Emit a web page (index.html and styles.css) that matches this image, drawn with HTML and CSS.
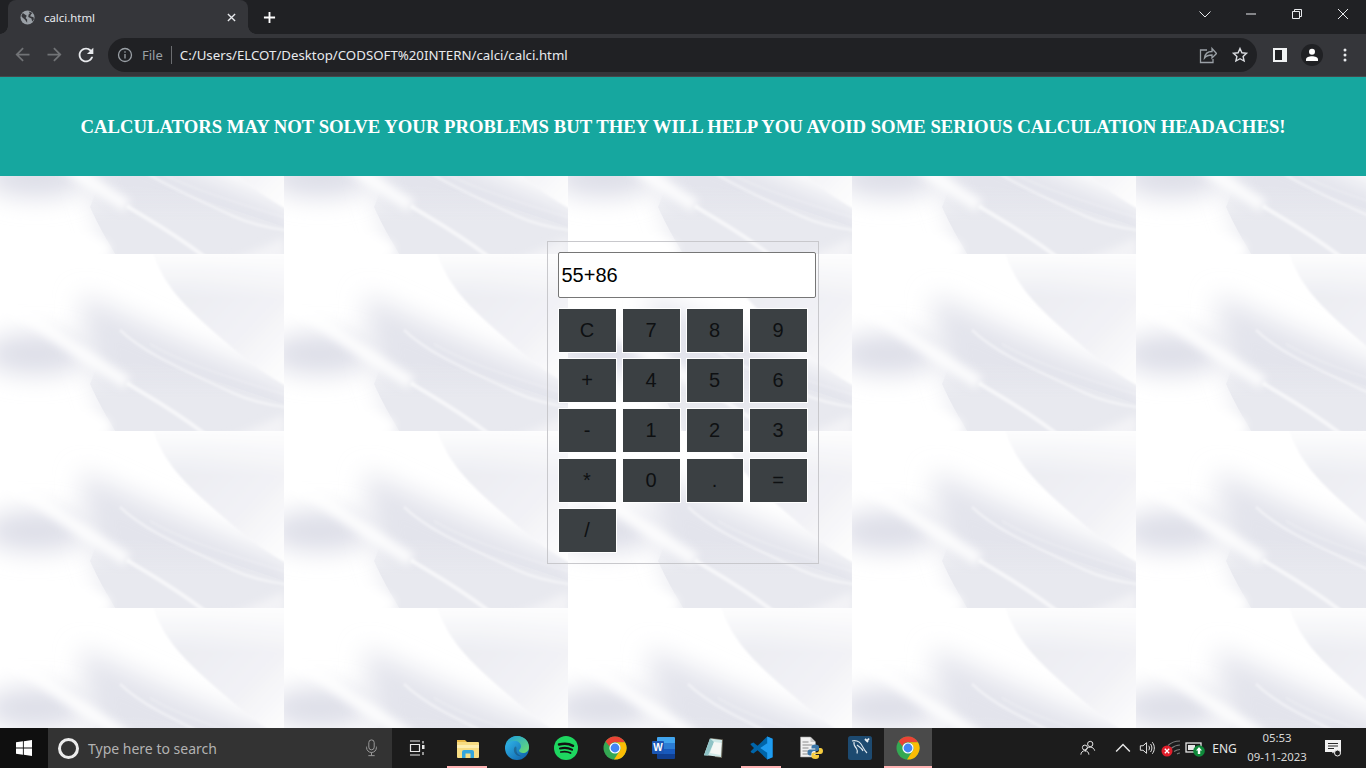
FILE: index.html
```html
<!DOCTYPE html>
<html lang="en">
<head>
<meta charset="utf-8">
<title>calci.html</title>
<link rel="stylesheet" href="styles.css">
</head>
<body>
<svg class="defs" width="0" height="0" aria-hidden="true">
  <symbol id="chrome" viewBox="0 0 24 24">
    <circle cx="12" cy="12" r="11.5" fill="#34a853"/>
    <path fill="#ea4335" d="M12 .5a11.5 11.5 0 0 1 10 5.8H12a5.7 5.7 0 0 0-5.5 4L2.6 5.4A11.5 11.5 0 0 1 12 .5z"/>
    <path fill="#fbbc04" d="M22 6.3A11.5 11.5 0 0 1 11 23.5l4.9-7.4a5.7 5.7 0 0 0 1-6.7 5.7 5.7 0 0 0-4.9-3.1z"/>
    <circle cx="12" cy="12" r="5.6" fill="#fff"/>
    <circle cx="12" cy="12" r="4.4" fill="#4285f4"/>
  </symbol>
</svg>

<header class="tabstrip">
  <div class="tab">
    <svg class="favicon" viewBox="0 0 16 16"><circle cx="8" cy="8" r="7.5" fill="#9aa0a6"/><path fill="#35363a" d="M3 3.200 7.200 6 6 8.400 7.600 10v3.600L5.400 10.400 2 7.400 1.500 6zM9.500 1.500l3.800 1.700-1.500 1.400-1 2 3.700 1 .3 2.500-1.800 2.200-.8-3.300-3.400-1.600.4-2.700 1.200-.7z"/></svg>
    <span class="tab-title">calci.html</span>
    <svg class="tab-close" viewBox="0 0 10 10"><path d="M1 1l8 8M9 1l-8 8"/></svg>
  </div>
  <button class="new-tab" type="button"><svg viewBox="0 0 14 14"><path d="M7 1v12M1 7h12"/></svg></button>
  <div class="window-controls">
    <span class="win-btn"><svg viewBox="0 0 14 14"><path d="M1.500 4.500 7 10l5.500-5.500"/></svg></span>
    <span class="win-btn"><svg viewBox="0 0 14 14"><path d="M2 7h10"/></svg></span>
    <span class="win-btn"><svg viewBox="0 0 14 14"><path d="M2.500 4.500h7v7h-7zM4.500 4.500v-2h7v7h-2"/></svg></span>
    <span class="win-btn"><svg viewBox="0 0 14 14"><path d="M2 2l10 10M12 2 2 12"/></svg></span>
  </div>
</header>

<nav class="toolbar">
  <span class="tool dim"><svg viewBox="0 0 24 24"><path d="M20 11H7.800l5.600-5.600L12 4l-8 8 8 8 1.400-1.400L7.800 13H20z"/></svg></span>
  <span class="tool dim"><svg viewBox="0 0 24 24"><path d="M4 11h12.200l-5.600-5.600L12 4l8 8-8 8-1.400-1.400 5.600-5.600H4z"/></svg></span>
  <span class="tool"><svg viewBox="0 0 24 24"><path d="M17.650 6.350A7.958 7.958 0 0 0 12 4c-4.420 0-7.990 3.580-7.990 8s3.570 8 7.990 8c3.730 0 6.840-2.550 7.730-6h-2.080A5.990 5.990 0 0 1 12 18c-3.310 0-6-2.690-6-6s2.690-6 6-6c1.660 0 3.140.690 4.220 1.780L13 11h7V4l-2.350 2.350z"/></svg></span>
  <div class="omnibox">
    <svg class="info" viewBox="0 0 16 16"><circle cx="8" cy="8" r="6.500"/><path d="M8 7v4.500M8 4.300v1.400"/></svg>
    <span class="scheme">File</span>
    <span class="omni-sep"></span>
    <span class="url">C:/Users/ELCOT/Desktop/CODSOFT%20INTERN/calci/calci.html</span>
    <span class="omni-actions">
      <span class="omni-act"><svg viewBox="0 0 18 18"><path d="M8 4H1.500v12.500h12.500V13M5.500 12c.5-4 3.500-6.500 7.500-6.500V2.500l4.500 5-4.500 4.500V9c-3 0-5.800 .8-7.500 3z"/></svg></span>
      <span class="omni-act"><svg viewBox="0 0 18 18"><path d="M9 2.500l1.900 4.300 4.600.5-3.400 3.100 1 4.600L9 12.700l-4.100 2.300 1-4.600-3.400-3.100 4.600-.5z"/></svg></span>
    </span>
  </div>
  <span class="tool panel-btn"><span class="panel-icon"></span></span>
  <span class="tool"><span class="avatar"><svg viewBox="0 0 14 14"><circle cx="7" cy="3.800" r="3"/><path d="M1 13v-1.500C1 9.500 4 8.300 7 8.300s6 1.200 6 3.200V13z"/></svg></span></span>
  <span class="tool"><svg viewBox="0 0 16 16" class="dots"><circle cx="8" cy="3" r="1.500"/><circle cx="8" cy="8" r="1.500"/><circle cx="8" cy="13" r="1.500"/></svg></span>
</nav>

<main class="page">
  <div class="banner">
    <h3 class="banner-text">CALCULATORS MAY NOT SOLVE YOUR PROBLEMS BUT THEY WILL HELP YOU AVOID SOME SERIOUS CALCULATION HEADACHES!</h3>
  </div>
  <section class="calc">
    <input class="display" type="text" value="55+86">
    <div class="keys">
      <button class="key" type="button">C</button>
      <button class="key" type="button">7</button>
      <button class="key" type="button">8</button>
      <button class="key" type="button">9</button>
      <button class="key" type="button">+</button>
      <button class="key" type="button">4</button>
      <button class="key" type="button">5</button>
      <button class="key" type="button">6</button>
      <button class="key" type="button">-</button>
      <button class="key" type="button">1</button>
      <button class="key" type="button">2</button>
      <button class="key" type="button">3</button>
      <button class="key" type="button">*</button>
      <button class="key" type="button">0</button>
      <button class="key" type="button">.</button>
      <button class="key" type="button">=</button>
      <button class="key" type="button">/</button>
    </div>
  </section>
</main>

<footer class="taskbar">
  <div class="start">
    <svg viewBox="0 0 16 16"><path d="M0 2.300 6.900 1.300v6.300H0zM7.800 1.200 16 0v7.600H7.800zM0 8.500h6.900v6.200L0 13.700zM7.800 8.500H16V16l-8.200-1.200z"/></svg>
  </div>
  <div class="search">
    <span class="cortana"></span>
    <span class="search-text">Type here to search</span>
    <svg class="mic" viewBox="0 0 14 20"><rect x="4" y="1" width="6" height="11" rx="3"/><path d="M1.500 8.500v1a5.500 5.500 0 0 0 11 0v-1M7 15v3.500M3.500 18.500h7"/></svg>
  </div>
  <div class="task-view">
    <svg viewBox="0 0 16 16"><path d="M1 1h10M1 15h10M1.500 4.500h9v7h-9zM14 1v2.500M14 12v3"/><rect x="13" y="5" width="2.500" height="4" fill="#e8e8e8" stroke="none"/></svg>
  </div>
  <div class="apps">
    <span class="app running">
      <svg viewBox="0 0 24 24"><path fill="#e9b949" d="M1 4h8l2 2h-10z"/><path fill="#f7dc83" d="M1 6h21a1 1 0 0 1 1 1v14a1 1 0 0 1-1 1H2a1 1 0 0 1-1-1z"/><path fill="#fdeeb0" d="M1 9h22v3H1z"/><path fill="#34a5dc" d="M6 22v-6a2 2 0 0 1 2-2h8a2 2 0 0 1 2 2v6h-3.500v-4.500h-5V22z"/></svg>
    </span>
    <span class="app">
      <svg viewBox="0 0 24 24"><defs><linearGradient id="edgeA" x1="0" y1="0" x2="1" y2="1"><stop offset="0" stop-color="#35c1f1"/><stop offset="1" stop-color="#0c59a4"/></linearGradient><linearGradient id="edgeB" x1="0" y1="0" x2="1" y2="1"><stop offset="0" stop-color="#1b9de2"/><stop offset="1" stop-color="#6ee06a"/></linearGradient></defs><circle cx="12" cy="12" r="12" fill="url(#edgeA)"/><path fill="url(#edgeB)" d="M2 6C5 1 10 0 12 0c7 0 12 5 12 11 0 4-3 6-6 6-2 0-4-1-4-2.500 0-1 2-1.500 2-4C16 7 13 5 10 5 6 5 3.500 6 2 8z"/><path fill="#1a2b3c" d="M10.500 10.500c-2 1-2.500 5 .5 8 1.500 1.500 4 2 5.500 1.500-3.500-.5-5.500-4-5-7 .1-1 0-2.500-1-2.500z" opacity=".35"/></svg>
    </span>
    <span class="app">
      <svg viewBox="0 0 24 24"><circle cx="12" cy="12" r="12" fill="#1ed760"/><g fill="none" stroke="#121212" stroke-linecap="round"><path stroke-width="2.500" d="M5 8.500c4.500-1.200 10-1 14 1.300"/><path stroke-width="2.100" d="M6 12.500c4-1 8.500-.7 12 1.200"/><path stroke-width="1.700" d="M6.800 16c3.500-.8 7-.5 9.800 1"/></g></svg>
    </span>
    <span class="app"><svg viewBox="0 0 24 24"><use href="#chrome"/></svg></span>
    <span class="app">
      <svg viewBox="0 0 24 24"><path fill="#41a5ee" d="M6 1h16a1 1 0 0 1 1 1v5H5V2a1 1 0 0 1 1-1z"/><path fill="#2b7cd3" d="M5 7h18v6H5z"/><path fill="#185abd" d="M5 13h18v5H5z"/><path fill="#103f91" d="M5 18h18v4a1 1 0 0 1-1 1H6a1 1 0 0 1-1-1z"/><rect x="0" y="5" width="12" height="13" rx="1" fill="#1a56b5"/><text x="6" y="15.300" class="word-w">W</text></svg>
    </span>
    <span class="app">
      <svg viewBox="0 0 24 24"><path fill="#6e6a5c" d="M10 2 22 3.500 21 22 14 21z"/><path fill="#cfe9e8" d="M9 2.500 21 4 20 21 3 19z"/><path fill="#8fc3c6" d="M9 2.500 13 6 7 19.500H3z"/><path fill="#f4f7f5" d="M13 6 20.500 7 19.500 19 9 17z"/></svg>
    </span>
    <span class="app running">
      <svg viewBox="0 0 24 24"><path fill="#0065a9" d="M17.200.6 7.600 9.700 3.400 6.500 1.200 7.600a1 1 0 0 0-.2 1.400L4 12 1 15c-.4.400-.3 1 .2 1.400l2.200 1.100 4.200-3.200 9.600 9.100 5.400-2.200V2.800z"/><path fill="#1f9cf0" d="M17.200.6 22.600 2.800v18.400l-5.400 2.200zM17.200 7.200 10.200 12l7 4.800z"/></svg>
    </span>
    <span class="app">
      <svg viewBox="0 0 24 24"><path fill="#f1f1f1" stroke="#9a9a9a" stroke-width=".6" d="M1.500 1h10l5 5v15H1.500z"/><path fill="#c9c9c9" d="M11.500 1v5h5z"/><path stroke="#8b8b8b" stroke-width="1" d="M3.500 6h6M3.500 9h10M3.500 12h6M3.500 15h6M3.500 18h6"/><path fill="#3a76a8" d="M16 8.500c-2.500 0-3.500 1-3.500 2.500v1.500H17v1h-6c-1.500 0-2.500 1-2.500 3s1 3 2.500 3h1.500v-2c0-1.500 1-2.500 2.500-2.500h3c1 0 2-1 2-2V11c0-1.500-1-2.500-4-2.500z"/><path fill="#f5cb3e" d="M16.500 23c2.500 0 3.500-1 3.500-2.500V19h-4.500v-1h6c1.500 0 2.500-1 2.500-3s-1-3-2.500-3H20v2c0 1.500-1 2.500-2.500 2.500h-3c-1 0-2 1-2 2v2c0 1.500 1 2.500 4 2.500z"/></svg>
    </span>
    <span class="app">
      <svg viewBox="0 0 24 24"><rect width="24" height="24" rx="2.500" fill="#1d4a70"/><path fill="none" stroke="#dfe8ee" stroke-width="1.100" d="M4 5c3-1 7 0 9 3 2 3 3 6 6 9M6 6c-.5 3 1 5 2.500 6.500 1 1.500 1 3 .5 5M9 9c2 2 5 3 6 6"/><path stroke="#eaf0f4" stroke-width="1.800" d="M17 3l3 3M21 2.500l-2 2.500"/></svg>
    </span>
    <span class="app active running"><svg viewBox="0 0 24 24"><use href="#chrome"/></svg></span>
  </div>
  <div class="tray">
    <span class="tray-slot people"><svg viewBox="0 0 18 18"><g fill="none" stroke="#e6e6e6" stroke-width="1.100"><circle cx="11.500" cy="4.500" r="3"/><path d="M6 13c0-3 2.500-5 5.500-5S16 10 16.500 12"/><circle cx="5.500" cy="8.500" r="2.800"/><path d="M1 16.500c0-2.500 2-4.500 4.500-4.500S10 14 10 16.500"/></g></svg></span>
    <span class="tray-slot chevron"><svg viewBox="0 0 14 14"><path d="M1 10l6-6 6 6" fill="none" stroke="#e6e6e6" stroke-width="1.300"/></svg></span>
    <span class="tray-slot volume"><svg viewBox="0 0 18 18"><g fill="none" stroke="#e6e6e6" stroke-width="1.100"><path d="M1.500 6.500h3l4-3.500v12l-4-3.500h-3z"/><path d="M11 6.500c1 1.500 1 3.500 0 5M13 4.500c2 2.500 2 6.500 0 9M15 2.500c3 4 3 9 0 13"/></g></svg></span>
    <span class="tray-slot wifi"><svg viewBox="0 0 20 18"><g fill="none" stroke="#7b7b7b" stroke-width="1.200"><path d="M7 6.500C10 3.500 15 2 19 2M10 9.500c2.500-2 5.500-3.500 9-3.500M13 12.500c2-1.200 4-2 6-2M16 15c1-.6 2-1 3-1"/></g><circle cx="6" cy="12" r="5.500" fill="#e01e2b"/><path d="M3.800 9.800l4.400 4.400M8.200 9.800l-4.400 4.400" stroke="#fff" stroke-width="1.300"/></svg></span>
    <span class="tray-slot battery"><svg viewBox="0 0 20 18"><rect x="1" y="4" width="15" height="9" fill="none" stroke="#e6e6e6" stroke-width="1.300"/><rect x="3" y="6" width="7" height="5" fill="#e6e6e6"/><circle cx="14" cy="12" r="5.800" fill="#0f8a3a"/><path d="M14 8l3 3.500h-1.800V15h-2.400v-3.500H11z" fill="#fff"/></svg></span>
    <span class="tray-lang">ENG</span>
    <span class="clock"><span>05:53</span><span>09-11-2023</span></span>
    <span class="notify"><svg viewBox="0 0 18 18"><path fill="#f2f2f2" d="M1 1h16v12H10l-1 1.500L8 13H1z"/><path stroke="#2a2a2a" stroke-width="1" d="M4 4.500h10M4 7h10M4 9.500h6"/><circle cx="13.500" cy="14" r="3" fill="#1c1c1c" stroke="#f2f2f2" stroke-width="1"/></svg></span>
  </div>
</footer>
</body>
</html>
```

FILE: styles.css
```css
* { box-sizing: border-box; }

html, body { height: 100%; }

body {
  margin: 0;
  height: 768px;
  overflow: hidden;
  display: flex;
  flex-direction: column;
  font-family: "Noto Sans", "Open Sans", sans-serif;
  background: #fff;
}

.defs { position: absolute; }

svg { display: block; }

/* Browser tab strip */
.tabstrip {
  flex: none;
  height: 34px;
  display: flex;
  align-items: stretch;
  background: #202124;
  padding-left: 8px;
}

.tab {
  position: relative;
  width: 240px;
  display: flex;
  align-items: center;
  padding: 0 10px 0 12px;
  background: #35363a;
  border-radius: 8px 8px 0 0;
}

.tab::before,
.tab::after {
  content: "";
  position: absolute;
  bottom: 0;
  width: 8px;
  height: 8px;
}

.tab::before {
  left: -8px;
  background: radial-gradient(circle at 0 0, #202124 7.500px, #35363a 8px);
}

.tab::after {
  right: -8px;
  background: radial-gradient(circle at 100% 0, #202124 7.500px, #35363a 8px);
}

.favicon { width: 15px; height: 15px; flex: none; }

.tab-title {
  flex: 1;
  margin-left: 9px;
  font-size: 11.400px;
  color: #e8eaed;
}

.tab-close { width: 9px; height: 9px; margin-right: 2px; }
.tab-close path { fill: none; stroke: #e8eaed; stroke-width: 1.500; }

.new-tab {
  width: 28px;
  margin-left: 7px;
  padding: 0;
  border: 0;
  background: none;
  display: flex;
  align-items: center;
  justify-content: center;
}
.new-tab svg { width: 13px; height: 13px; }
.new-tab path { fill: none; stroke: #fff; stroke-width: 2; }

.window-controls { margin-left: auto; display: flex; height: 28px; }

.win-btn {
  width: 46px;
  display: flex;
  align-items: center;
  justify-content: center;
}
.win-btn svg { width: 14px; height: 14px; }
.win-btn path { fill: none; stroke: #e8eaed; stroke-width: 1; }

/* Browser toolbar */
.toolbar {
  flex: none;
  height: 43px;
  display: flex;
  align-items: center;
  padding: 0 5px 1px 6px;
  background: #35363a;
  border-bottom: 1px solid #47484b;
}

.tool {
  width: 32px;
  height: 32px;
  flex: none;
  display: flex;
  align-items: center;
  justify-content: center;
}
.tool svg { width: 22px; height: 22px; fill: #e8eaed; }
.tool.dim svg { fill: #717376; width: 21px; height: 21px; }

.omnibox {
  width: 1149px;
  height: 34px;
  margin: 0 7px 0 6px;
  flex: none;
  display: flex;
  align-items: center;
  padding-left: 9px;
  background: #202124;
  border-radius: 17px;
}

.info { width: 16px; height: 16px; flex: none; }
.info circle, .info path { fill: none; stroke: #9aa0a6; stroke-width: 1.300; }

.scheme { margin-left: 9px; font-size: 13px; color: #9aa0a6; }
.omni-sep { width: 1px; height: 18px; margin: 0 8px 0 8px; background: #6b6d70; }
.url { font-size: 13.250px; color: #e8eaed; }

.omni-actions { margin-left: auto; display: flex; padding-right: 1px; }
.omni-act {
  width: 32px;
  height: 32px;
  display: flex;
  align-items: center;
  justify-content: center;
}
.omni-act svg { width: 18px; height: 18px; }
.omni-act path { fill: none; stroke: #9aa0a6; stroke-width: 1.300; }
.omni-act + .omni-act path { stroke: #dadce0; stroke-width: 1.400; }

.panel-icon {
  width: 14px;
  height: 14px;
  border: 2px solid #f1f3f4;
  border-right-width: 5px;
  background: #202124;
}

.avatar {
  width: 22px;
  height: 22px;
  border-radius: 50%;
  background: #202124;
  display: flex;
  align-items: center;
  justify-content: center;
}
.tool .avatar svg { width: 14px; height: 14px; fill: #fff; }
.tool svg.dots { width: 16px; height: 16px; fill: #e8eaed; margin-left: 2px; }

/* Page */
.page {
  flex: 1;
  min-height: 0;
  display: flex;
  flex-direction: column;
  align-items: center;
  background-color: #fff;
  background-size: 284px 177px;
  background-repeat: repeat;
  background-image: url("data:image/svg+xml,<svg xmlns='http://www.w3.org/2000/svg' width='284' height='177' viewBox='0 0 284 177'><defs><filter id='a' filterUnits='userSpaceOnUse' x='-60' y='-60' width='404' height='297'><feGaussianBlur stdDeviation='13'/></filter><filter id='b' filterUnits='userSpaceOnUse' x='-60' y='-60' width='404' height='297'><feGaussianBlur stdDeviation='4'/></filter><filter id='c' filterUnits='userSpaceOnUse' x='-60' y='-60' width='404' height='297'><feGaussianBlur stdDeviation='.7'/></filter><filter id='d' filterUnits='userSpaceOnUse' x='-60' y='-60' width='404' height='297'><feGaussianBlur stdDeviation='1.300'/></filter><linearGradient id='g' gradientUnits='userSpaceOnUse' x1='0' y1='105' x2='0' y2='145'><stop offset='0' stop-color='%23e8e9ef' stop-opacity='0'/><stop offset='1' stop-color='%23e8e9ef'/></linearGradient><linearGradient id='w' gradientUnits='userSpaceOnUse' x1='185' y1='35' x2='285' y2='130'><stop offset='0' stop-color='%23ecedf2'/><stop offset='.55' stop-color='%23f2f2f6'/><stop offset='1' stop-color='%23fefefe'/></linearGradient><linearGradient id='t' gradientUnits='userSpaceOnUse' x1='0' y1='0' x2='0' y2='45'><stop offset='0' stop-color='%23fff' stop-opacity='.9'/><stop offset='1' stop-color='%23fff' stop-opacity='0'/></linearGradient></defs><rect width='284' height='177' fill='%23fff'/><ellipse cx='36' cy='100' rx='52' ry='20' fill='%23dcdde7' filter='url(%23a)'/><path d='M80 40 150 72 300 135V190H115L90 110Z' fill='%23e3e4ec' filter='url(%23a)'/><path d='M90 130C98 148 107 163 117 180H300V155L180 115 100 105Z' fill='url(%23g)' filter='url(%23c)'/><path d='M-20 46C20 52 45 74 62 86 85 102 110 118 127 129' fill='none' stroke='%23fff' stroke-width='13' stroke-opacity='.85' filter='url(%23b)'/><path d='M127 129C140 138 165 150 205 180' fill='none' stroke='%23fff' stroke-width='4' stroke-opacity='.6' filter='url(%23d)'/><ellipse cx='40' cy='172' rx='70' ry='18' fill='%23fff' filter='url(%23b)'/><path d='M120 76C140 95 165 108 233 139 250 147 270 152 300 155' fill='none' stroke='%23fff' stroke-width='2.500' stroke-opacity='.45' filter='url(%23d)'/><path d='M150 90C175 105 215 120 290 142' fill='none' stroke='%23fff' stroke-width='1.500' stroke-opacity='.25' filter='url(%23d)'/><path d='M285 160V190H215C240 180 265 170 285 160Z' fill='%23f3f3f6' filter='url(%23b)'/><g filter='url(%23d)'><path d='M153 -5C160 25 178 45 205 70 230 92 255 115 290 134V-5Z' fill='url(%23w)'/><path d='M153 -5C160 25 178 45 205 70 230 92 255 115 290 134V-5Z' fill='url(%23t)'/></g></svg>");
}

.banner {
  flex: none;
  align-self: stretch;
  height: 99px;
  display: flex;
  align-items: center;
  justify-content: center;
  background: #16a79f;
}

.banner-text {
  margin: 0;
  font-family: "Liberation Serif", "Times New Roman", serif;
  font-size: 18.720px;
  font-weight: 700;
  color: #fff;
}

/* Calculator */
.calc {
  width: 272px;
  margin-top: 65px;
  margin-right: 1px;
  padding: 10px;
  border: 1px solid #c8c8cc;
}

.display {
  display: block;
  width: 258px;
  height: 46px;
  margin: 0 0 10px;
  padding: 0 3px;
  border: 1px solid #767676;
  border-radius: 2px;
  background: #fff;
  color: #000;
  font-family: "Liberation Sans", Arial, sans-serif;
  font-size: 20px;
}

.keys {
  display: grid;
  grid-template-columns: 59px 59px 58px 59px;
  grid-auto-rows: 45px;
  column-gap: 5px;
  row-gap: 5px;
}

.key {
  padding: 0;
  border: 1px solid #fff;
  background: #3b4043;
  color: #0e1012;
  font-family: "Liberation Sans", Arial, sans-serif;
  font-size: 20px;
}

/* Windows taskbar */
.taskbar {
  flex: none;
  height: 40px;
  display: flex;
  align-items: stretch;
  background: #1c1c1c;
  color: #e6e6e6;
}

.start {
  width: 48px;
  display: flex;
  align-items: center;
  justify-content: center;
  background: #0f0f0f;
}
.start svg { width: 16px; height: 16px; fill: #fff; }

.search {
  width: 344px;
  display: flex;
  align-items: center;
  padding-left: 10px;
  background: #333;
}

.cortana {
  width: 21px;
  height: 21px;
  flex: none;
  border: 3px solid #ececec;
  border-radius: 50%;
}

.search-text {
  flex: 1;
  margin-left: 9px;
  font-size: 14px;
  color: #b2b2b2;
}

.mic { width: 13px; height: 18px; margin-right: 14px; }
.mic rect, .mic path { fill: none; stroke: #9a9a9a; stroke-width: 1.100; }

.task-view {
  width: 51px;
  padding-right: 1px;
  display: flex;
  align-items: center;
  justify-content: center;
}
.task-view svg { width: 16px; height: 16px; }
.task-view path { fill: none; stroke: #e8e8e8; stroke-width: 1.200; }

.apps { display: flex; }

.app {
  width: 49px;
  display: flex;
  align-items: center;
  justify-content: center;
  position: relative;
}
.app svg { width: 24px; height: 24px; }

.app.running::after {
  content: "";
  position: absolute;
  left: 4px;
  right: 5px;
  bottom: 0;
  height: 2px;
  background: #ffb3b3;
}

.app.active { background: #4a4a4a; width: 48px; }
.app.active::after { left: 0; right: 0; }

.word-w {
  font-family: "Liberation Sans", Arial, sans-serif;
  font-size: 10px;
  font-weight: 700;
  fill: #fff;
  text-anchor: middle;
}

.tray { margin-left: auto; display: flex; align-items: stretch; padding-right: 11px; }

.tray-slot { display: flex; align-items: center; justify-content: center; }
.tray-slot svg { width: 16px; height: 16px; }
.people { width: 36px; margin-right: 6px; }
.chevron { width: 22px; }
.volume { width: 25px; }
.wifi { width: 24px; }
.wifi svg { width: 20px; height: 18px; }
.battery { width: 23px; }
.battery svg { width: 20px; height: 18px; }

.tray-lang {
  width: 37px;
  display: flex;
  align-items: center;
  justify-content: center;
  font-size: 12px;
  color: #e6e6e6;
}

.clock {
  width: 68px;
  display: flex;
  flex-direction: column;
  align-items: center;
  justify-content: center;
  gap: 3px;
  padding-bottom: 1px;
  font-size: 11.400px;
  line-height: 16px;
  color: #d8d8d8;
}

.notify {
  width: 44px;
  display: flex;
  align-items: center;
  justify-content: center;
}
.notify svg { width: 18px; height: 18px; }
```
